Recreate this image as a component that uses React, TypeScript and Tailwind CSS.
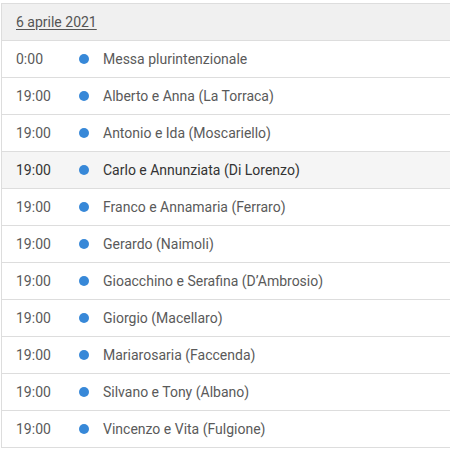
import React from 'react';

const rows = [
  { time: '0:00', name: 'Messa plurintenzionale' },
  { time: '19:00', name: 'Alberto e Anna (La Torraca)' },
  { time: '19:00', name: 'Antonio e Ida (Moscariello)' },
  { time: '19:00', name: 'Carlo e Annunziata (Di Lorenzo)', hover: true },
  { time: '19:00', name: 'Franco e Annamaria (Ferraro)' },
  { time: '19:00', name: 'Gerardo (Naimoli)' },
  { time: '19:00', name: 'Gioacchino e Serafina (D\u2019Ambrosio)' },
  { time: '19:00', name: 'Giorgio (Macellaro)' },
  { time: '19:00', name: 'Mariarosaria (Faccenda)' },
  { time: '19:00', name: 'Silvano e Tony (Albano)' },
  { time: '19:00', name: 'Vincenzo e Vita (Fulgione)' },
];

const App = () => {
  return (
    <div className="bg-white pt-[3px] pl-[1px] w-[450px] h-[449px] overflow-hidden" style={{ fontFamily: 'Roboto, "Liberation Sans", sans-serif' }}>
      <div className="border-t border-l border-[#dddddd] w-[470px]">
        <div className="h-[37px] bg-[#f0f0f0] border-b border-[#dddddd] flex items-center pl-[14px]">
          <span className="text-[14px] text-[#555555] underline underline-offset-2">6 aprile 2021</span>
        </div>
        {rows.map((r, i) => (
          <div
            key={i}
            className={
              r.hover
                ? 'h-[37px] border-b border-[#dddddd] flex items-center bg-[#f5f5f5] text-[#333333]'
                : 'h-[37px] border-b border-[#dddddd] flex items-center bg-white text-[#5a5a5a]'
            }
          >
            <span className="w-[62px] pl-[14px] text-[14px]">{r.time}</span>
            <span className="w-[10px] h-[10px] rounded-full bg-[#3788d8] ml-[15px]" />
            <span className="ml-[14px] text-[14px]">{r.name}</span>
          </div>
        ))}
      </div>
    </div>
  );
};

export default App;
